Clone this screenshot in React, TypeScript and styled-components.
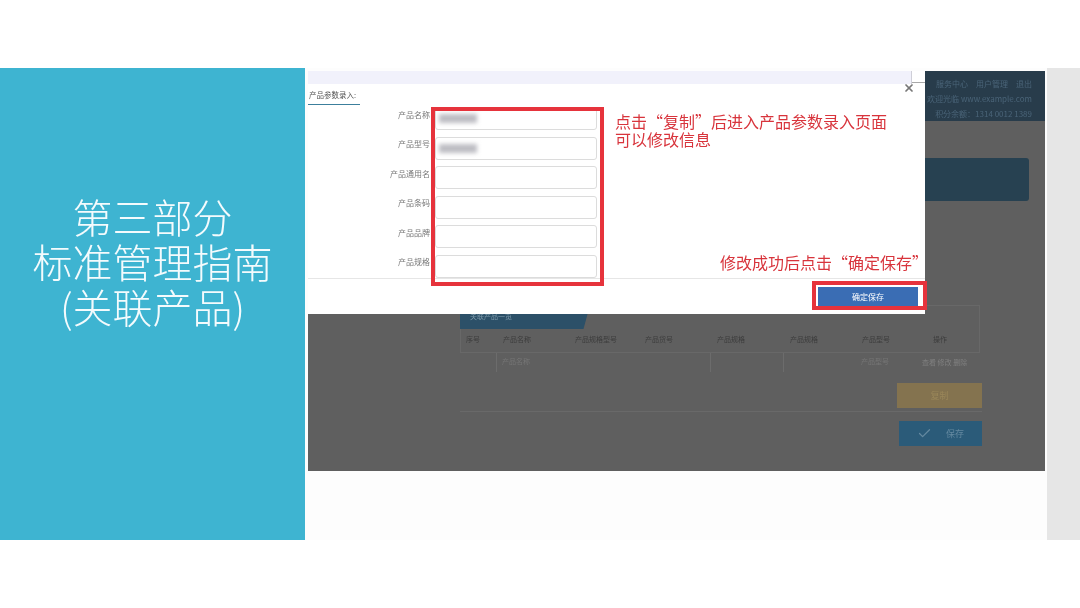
import * as React from 'react';
import styled, { createGlobalStyle } from 'styled-components';
import { X, Check } from 'lucide-react';

const GlobalStyle = createGlobalStyle`
	html, body {
		margin: 0;
		padding: 0;
		background: #fff;
		font-family: 'Noto Sans CJK SC', 'Liberation Sans', sans-serif;
	}
`;

const FIELDS = ['产品名称', '产品型号', '产品通用名', '产品条码', '产品品牌', '产品规格'];
const COLUMNS = ['序号', '产品名称', '产品规格型号', '产品货号', '产品规格', '产品规格', '产品型号', '操作'];

export default function App() {
	return (
		<Slide>
			<GlobalStyle />
			<Band>
				<TitlePanel>
					<TitleLine>第三部分</TitleLine>
					<TitleLine>标准管理指南</TitleLine>
					<TitleLine>(关联产品)</TitleLine>
				</TitlePanel>
				<ShotArea>
					<Shot>
						<PageHeader>
							<HeaderLine>服务中心　用户管理　退出</HeaderLine>
							<HeaderLine>，欢迎光临 www.example.com</HeaderLine>
							<HeaderLine>积分余额：1314 0012 1389</HeaderLine>
						</PageHeader>
						<Banner />
						<TableBlock>
							<TabRail>
								<TableTab>关联产品一览</TableTab>
							</TabRail>
							<HeadRow>
								{COLUMNS.map((col, i) => (
									<HeadCell key={i}>{col}</HeadCell>
								))}
							</HeadRow>
							<BodyRow>
								<BodyCell ruled />
								<BodyCell>产品名称</BodyCell>
								<BodyCell />
								<BodyCell ruled />
								<BodyCell ruled />
								<BodyCell />
								<BodyCell>产品型号</BodyCell>
								<OpsCell>查看 修改 删除</OpsCell>
							</BodyRow>
						</TableBlock>
						<ActionColumn>
							<ActionButton tone='#84734f' ink='#998659' width={85}>复制</ActionButton>
							<ActionRule />
							<ActionButton tone='#2b5b79' ink='#6489a0' width={83}>
								<Check size={15} strokeWidth={2} />
								保存
							</ActionButton>
						</ActionColumn>

						<Modal>
							<ModalTopBar>
								<TopBarFill />
								<TopBarCorner />
							</ModalTopBar>
							<TabRow>
								<ModalTab>产品参数录入:</ModalTab>
							</TabRow>
							<CloseMark>
								<X size={12} strokeWidth={3.5} />
							</CloseMark>
							<Form>
								{FIELDS.map((field, i) => (
									<FieldRow key={field}>
										<FieldLabel>{field}</FieldLabel>
										<FieldInput>{i < 2 && <Smudge />}</FieldInput>
									</FieldRow>
								))}
							</Form>
							<ModalFooter>
								<SaveButton>确定保存</SaveButton>
							</ModalFooter>
						</Modal>

						<RedFrame left={123} top={36} width={173} height={179} />
						<RedFrame left={504} top={210} width={115} height={29} />
						<Callout left={307} top={41}>
							点击“复制”后进入产品参数录入页面
							<br />
							可以修改信息
						</Callout>
						<Callout left={412} top={182}>修改成功后点击“确定保存”</Callout>
					</Shot>
				</ShotArea>
				<SideStrip />
			</Band>
		</Slide>
	);
}

const Slide = styled.div`
	width: 1080px;
	height: 608px;
	overflow: hidden;
	padding-top: 68px;
	box-sizing: border-box;
	background: #fff;
`;

const Band = styled.div`
	display: flex;
	height: 472px;
`;

const TitlePanel = styled.div`
	width: 305px;
	flex: none;
	display: flex;
	flex-direction: column;
	align-items: center;
	justify-content: center;
	padding-bottom: 86px;
	box-sizing: border-box;
	background: #3eb4d1;
	color: #f4fbfd;
`;

const TitleLine = styled.div`
	height: 45px;
	font-size: 40px;
	font-weight: 300;
	line-height: 45px;
	filter: blur(0.3px);
`;

const ShotArea = styled.div`
	flex: 1;
	padding: 3px 2px 0 3px;
	background: #fdfdfd;
`;

const Shot = styled.div`
	position: relative;
	height: 400px;
	display: flex;
	flex-direction: column;
	overflow: hidden;
	background: #5f5f5f;
	filter: blur(0.55px);
`;

const SideStrip = styled.div`
	width: 33px;
	flex: none;
	background: #e6e6e6;
`;

const PageHeader = styled.div`
	height: 50px;
	flex: none;
	padding: 5px 13px 0 0;
	box-sizing: border-box;
	background: #283c4b;
	color: #4a6478;
	font-size: 8px;
	line-height: 15px;
	text-align: right;
`;

const HeaderLine = styled.div`
	white-space: nowrap;
`;

const Banner = styled.div`
	align-self: flex-end;
	width: 300px;
	height: 43px;
	margin: 37px 16px 0 0;
	border-radius: 3px;
	background: #274151;
`;

const TableBlock = styled.div`
	width: 520px;
	margin: 104px 0 0 152px;
	flex: none;
`;

const TabRail = styled.div`
	border: 1px solid #686868;
	border-bottom: 0;
	height: 24px;
	box-sizing: border-box;
`;

const TableTab = styled.div`
	width: 130px;
	height: 24px;
	margin: -1px 0 0 -1px;
	padding: 6px 0 0 10px;
	box-sizing: border-box;
	background: #2c5068;
	clip-path: polygon(0 0, 100% 0, 95% 100%, 0 100%);
	color: #7c98aa;
	font-size: 7px;
	line-height: 11px;
`;

const HeadRow = styled.div`
	display: grid;
	grid-template-columns: 37px 72px 70px 72px 73px 72px 71px 53px;
	height: 24px;
	align-items: center;
	padding-bottom: 3px;
	border: 1px solid #686868;
	border-top: 0;
	box-sizing: border-box;
`;

const HeadCell = styled.div`
	padding-left: 5px;
	color: #3c3c3c;
	font-size: 7px;
	white-space: nowrap;
	overflow: hidden;
`;

const BodyRow = styled(HeadRow)`
	height: 19px;
	padding-bottom: 0;
	border: 0;
`;

const BodyCell = styled.div<{ ruled?: boolean }>`
	height: 19px;
	padding-left: 5px;
	box-sizing: border-box;
	border-right: 1px solid ${props => (props.ruled ? '#6c6c6c' : 'transparent')};
	color: #767676;
	font-size: 7px;
	line-height: 17px;
	white-space: nowrap;
`;

const OpsCell = styled.div`
	margin-left: -5px;
	color: #808080;
	font-size: 7px;
	line-height: 17px;
	white-space: nowrap;
`;

const ActionColumn = styled.div`
	display: flex;
	flex-direction: column;
	align-items: flex-end;
	width: 522px;
	margin: 11px 0 0 152px;
`;

const ActionRule = styled.div`
	align-self: stretch;
	height: 1px;
	margin: 3px 0 9px;
	background: #696969;
`;

const ActionButton = styled.div<{ tone: string; ink: string; width: number }>`
	display: flex;
	align-items: center;
	justify-content: center;
	gap: 14px;
	width: ${props => props.width}px;
	height: 25px;
	background: ${props => props.tone};
	color: ${props => props.ink};
	font-size: 9px;
`;

const Modal = styled.div`
	position: absolute;
	left: 0;
	top: 0;
	width: 617px;
	height: 243px;
	display: flex;
	flex-direction: column;
	background: #fff;
`;

const ModalTopBar = styled.div`
	display: flex;
	height: 13px;
	flex: none;
`;

const TopBarFill = styled.div`
	width: 604px;
	background: #f1f1fb;
	border-right: 1px solid #cfcfd8;
	box-sizing: border-box;
`;

const TopBarCorner = styled.div`
	flex: 1;
	height: 12px;
	border-bottom: 1px solid #a8a8a8;
	box-sizing: border-box;
`;

const TabRow = styled.div`
	height: 23px;
	flex: none;
`;

const ModalTab = styled.div`
	width: 52px;
	height: 21px;
	padding-left: 1px;
	box-sizing: border-box;
	border-bottom: 1px solid #3c7f9c;
	color: #555;
	font-size: 7.5px;
	line-height: 21px;
	white-space: nowrap;
`;

const CloseMark = styled.div`
	position: absolute;
	top: 11px;
	right: 10px;
	display: flex;
	color: #777;
`;

const Form = styled.div`
	display: flex;
	flex-direction: column;
	gap: 6.5px;
	height: 171px;
	flex: none;
	padding-left: 50px;
	box-sizing: border-box;
`;

const FieldRow = styled.div`
	display: flex;
	align-items: center;
	gap: 5px;
	height: 23px;
	flex: none;
`;

const FieldLabel = styled.div`
	width: 72px;
	margin-bottom: 8px;
	color: #777;
	font-size: 8px;
	line-height: 12px;
	text-align: right;
	white-space: nowrap;
`;

const FieldInput = styled.div`
	width: 162px;
	height: 23px;
	display: flex;
	align-items: center;
	padding-left: 3px;
	box-sizing: border-box;
	border: 1px solid #dcdcdc;
	border-radius: 3px;
	background: #fff;
`;

const Smudge = styled.div`
	width: 38px;
	height: 9px;
	background: #bdbdc3;
	filter: blur(2px);
`;

const ModalFooter = styled.div`
	flex: 1;
	display: flex;
	justify-content: flex-end;
	align-items: flex-start;
	padding: 8px 7px 0 0;
	border-top: 1px solid #e6e6e6;
`;

const SaveButton = styled.div`
	width: 100px;
	height: 19px;
	background: #3a6db4;
	color: #fff;
	font-size: 8px;
	line-height: 19px;
	text-align: center;
`;

const RedFrame = styled.div<{ left: number; top: number; width: number; height: number }>`
	position: absolute;
	left: ${props => props.left}px;
	top: ${props => props.top}px;
	width: ${props => props.width}px;
	height: ${props => props.height}px;
	box-sizing: border-box;
	border: 4px solid #e6333c;
`;

const Callout = styled.div<{ left: number; top: number }>`
	position: absolute;
	left: ${props => props.left}px;
	top: ${props => props.top}px;
	color: #d8343c;
	font-size: 16px;
	line-height: 18px;
	white-space: nowrap;
`;
